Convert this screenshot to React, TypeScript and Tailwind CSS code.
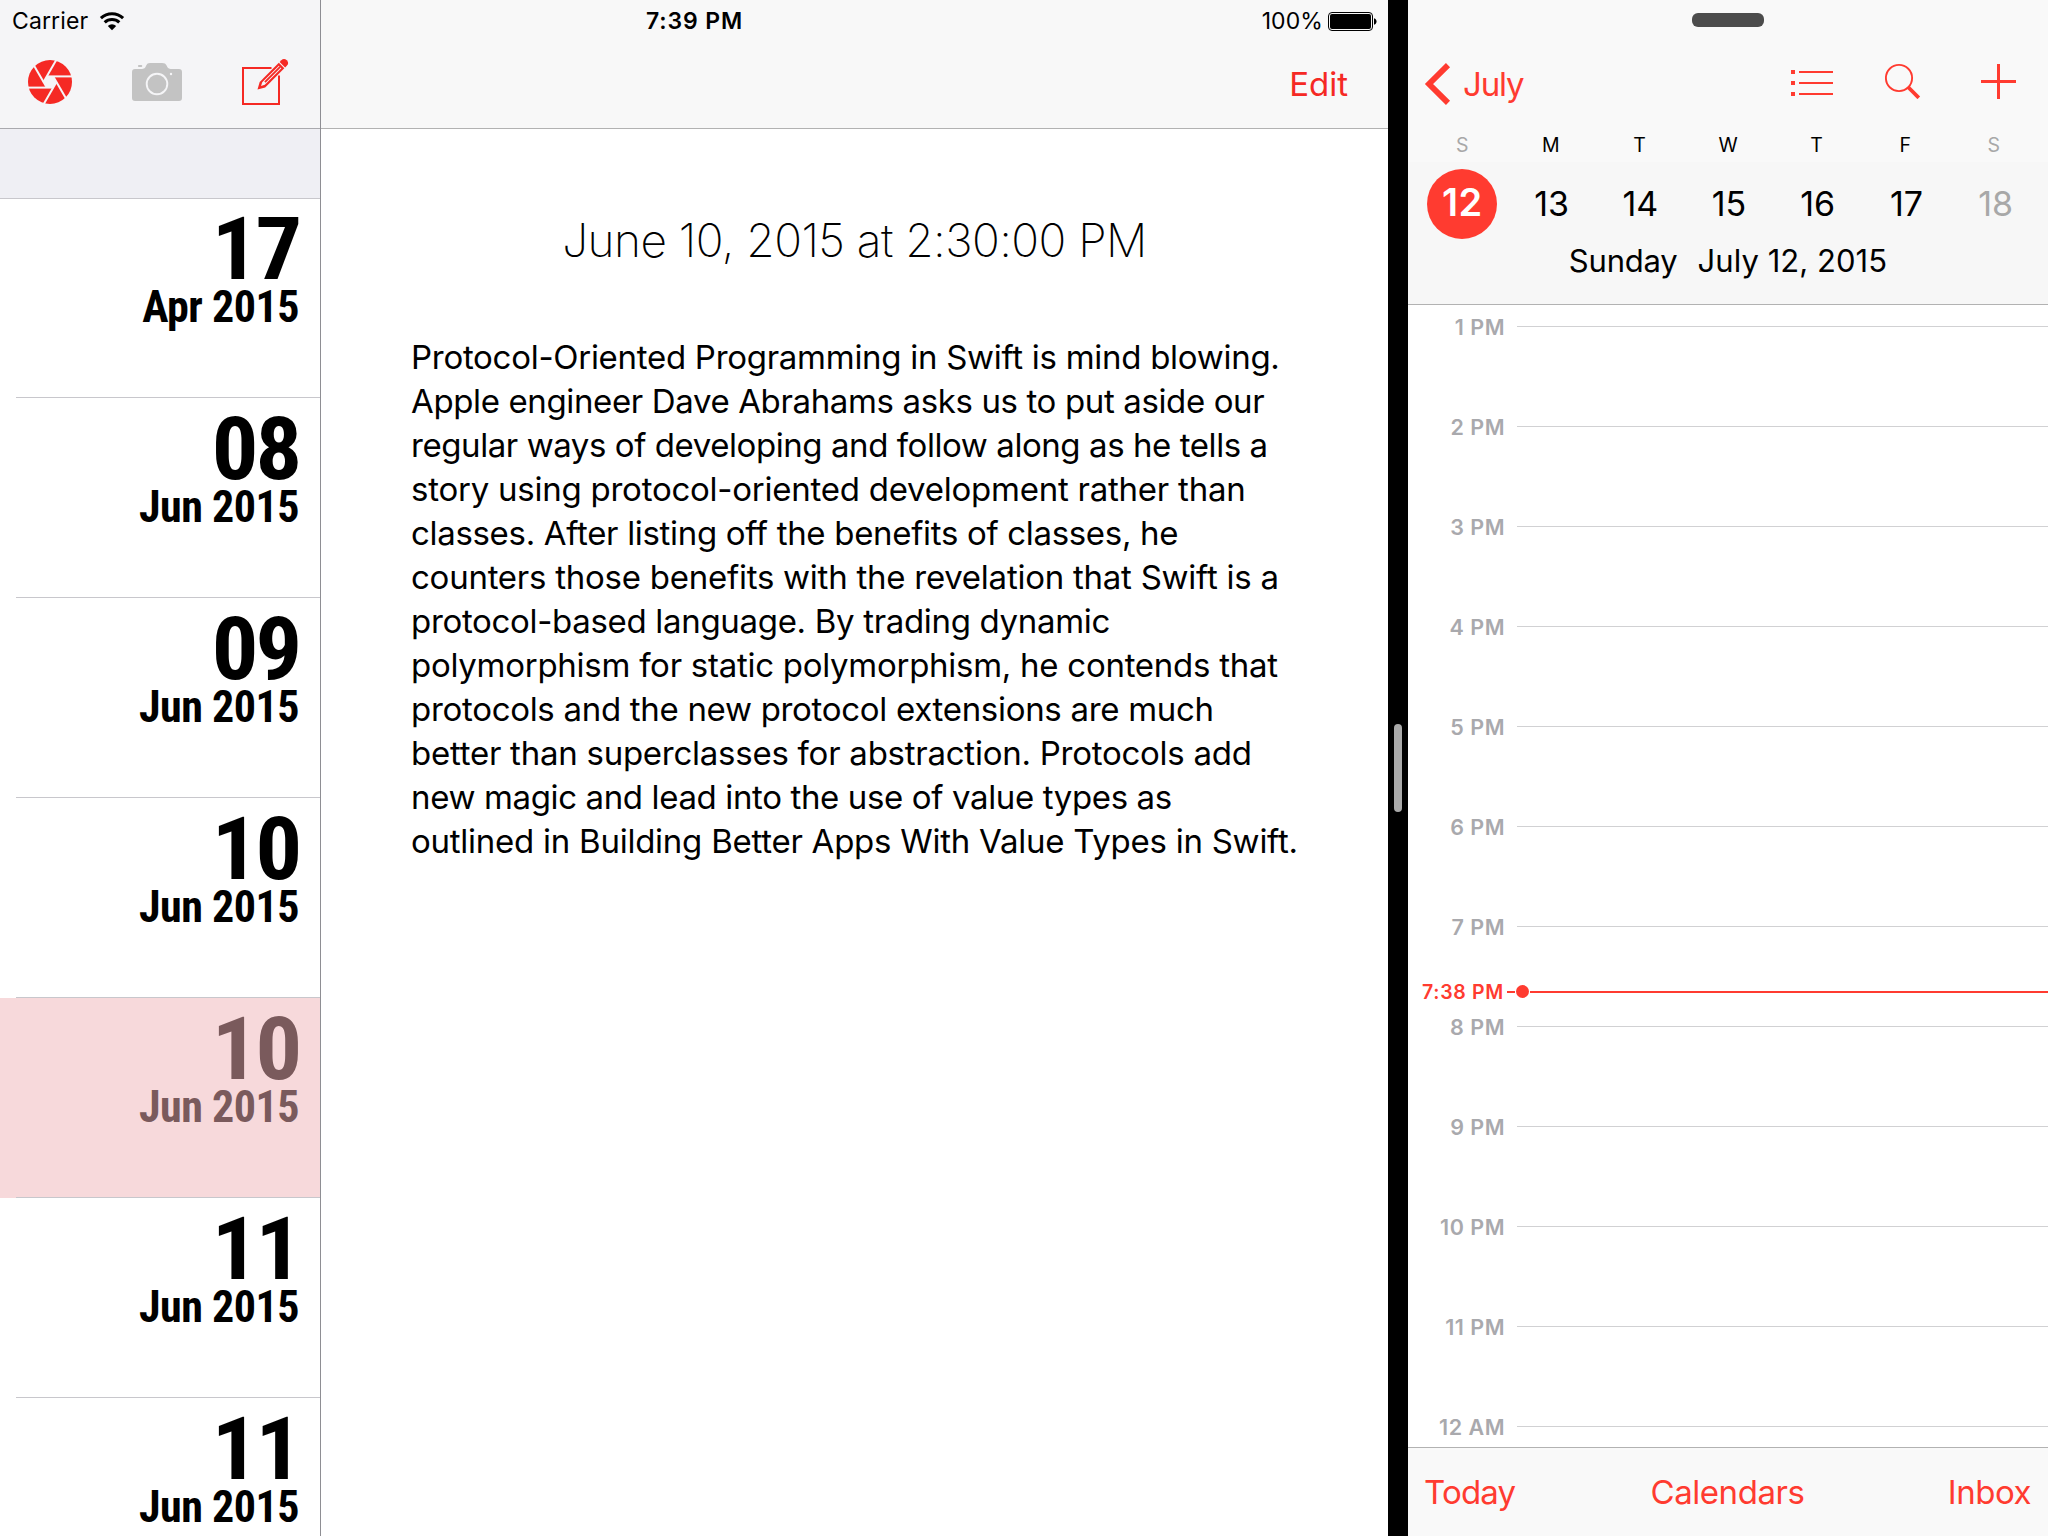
import React from "react";

type Entry = { day: string; month: string; selected?: boolean };

const entries: Entry[] = [
  { day: "17", month: "Apr 2015" },
  { day: "08", month: "Jun 2015" },
  { day: "09", month: "Jun 2015" },
  { day: "10", month: "Jun 2015" },
  { day: "10", month: "Jun 2015", selected: true },
  { day: "11", month: "Jun 2015" },
  { day: "11", month: "Jun 2015" },
];

const lines = [
  { text: "Protocol-Oriented Programming in Swift is mind blowing.", track: "tracking-[-0.28px]" },
  { text: "Apple engineer Dave Abrahams asks us to put aside our", track: "tracking-[-0.37px]" },
  { text: "regular ways of developing and follow along as he tells a", track: "tracking-[-0.43px]" },
  { text: "story using protocol-oriented development rather than", track: "tracking-[-0.24px]" },
  { text: "classes. After listing off the benefits of classes, he", track: "tracking-[-0.32px]" },
  { text: "counters those benefits with the revelation that Swift is a", track: "tracking-[-0.25px]" },
  { text: "protocol-based language. By trading dynamic", track: "tracking-[-0.32px]" },
  { text: "polymorphism for static polymorphism, he contends that", track: "tracking-[-0.27px]" },
  { text: "protocols and the new protocol extensions are much", track: "tracking-[-0.3px]" },
  { text: "better than superclasses for abstraction. Protocols add", track: "tracking-[-0.25px]" },
  { text: "new magic and lead into the use of value types as", track: "tracking-[-0.37px]" },
  { text: "outlined in Building Better Apps With Value Types in Swift.", track: "tracking-[-0.25px]" },
];

const week = [
  { letter: "S", date: "12", today: true, weekend: true },
  { letter: "M", date: "13" },
  { letter: "T", date: "14" },
  { letter: "W", date: "15" },
  { letter: "T", date: "16" },
  { letter: "F", date: "17" },
  { letter: "S", date: "18", weekend: true },
];

const hours = ["1 PM", "2 PM", "3 PM", "4 PM", "5 PM", "6 PM", "7 PM", "8 PM", "9 PM", "10 PM", "11 PM", "12 AM"];

function WifiIcon() {
  return (
    <svg className="h-[19px] w-[26px]" viewBox="0 0 26 19" fill="none" stroke="#000" strokeWidth="3.1">
      <path d="M1.9 6.1A16.5 16.5 0 0 1 24.1 6.1" />
      <path d="M5.7 10.4A10.7 10.7 0 0 1 20.3 10.4" />
      <path d="M13 18.3L8.8 13.9A6.1 6.1 0 0 1 17.2 13.9Z" fill="#000" stroke="none" />
    </svg>
  );
}

function BatteryIcon() {
  return (
    <svg className="h-[19px] w-[49px]" viewBox="0 0 49 19">
      <rect x="0.5" y="0.5" width="44" height="18" rx="3.5" fill="none" stroke="#000" />
      <rect x="2" y="2" width="41" height="15" rx="2" />
      <path d="M46 6.2C49.4 6.8 49.4 12.2 46 12.8Z" />
    </svg>
  );
}

function ApertureIcon() {
  return (
    <svg className="h-[44px] w-[44px]" viewBox="-22 -22 44 44">
      <circle r="22" fill="#f52924" />
      <path d="M-3.2 -5.6H3.2L6.4 0L3.2 5.6H-3.2L-6.4 0Z" fill="#f5f5f7" />
      <g stroke="#f5f5f7" strokeWidth="2">
        {[0, 60, 120, 180, 240, 300].map((a) => (
          <path key={a} d="M-3.2 -5.6H23" transform={`rotate(${a})`} />
        ))}
      </g>
    </svg>
  );
}

function CameraIcon() {
  return (
    <svg className="h-[38px] w-[50px]" viewBox="0 0 50 38">
      <path
        fill="#c3c3c3"
        d="M3 6H10C13 6 13.6 4 14.2 2.6C15 .7 16 0 18 0H30C32.6 0 33.8 .8 34.6 2.6C35.3 4.2 36 6 38.5 6H47Q50 6 50 9V35Q50 38 47 38H3Q0 38 0 35V9Q0 6 3 6Z"
      />
      <rect x="6" y="2" width="4.2" height="2" rx="0.8" fill="#c3c3c3" />
      <circle cx="25" cy="21" r="10.3" fill="none" stroke="#f5f5f7" strokeWidth="1.9" />
      <circle cx="39" cy="11" r="1.2" fill="#f5f5f7" />
    </svg>
  );
}

function ComposeIcon() {
  return (
    <svg className="h-[48px] w-[48px]" viewBox="0 0 48 48">
      <path d="M30.5 10H2V46H38V17.5" fill="none" stroke="#f52924" strokeWidth="2" />
      <g transform="translate(16.5 31.6) rotate(-45)">
        <path d="M0 0L7 -3.9H34V3.9H7Z" fill="#f52924" />
        <path d="M5 0L8.5 -1.8H32V-0.9H10.5V0.9H32V1.8H8.5Z" fill="#f5f5f7" />
        <path d="M35.2 -3.9H37.5A3.9 3.9 0 0 1 37.5 3.9H35.2Z" fill="#f52924" />
      </g>
    </svg>
  );
}

function Sidebar() {
  return (
    <aside className="flex w-[321px] shrink-0 flex-col overflow-hidden border-r border-[#8e8e93]">
      <header className="h-[129px] shrink-0 border-b border-[#a9a9ae] bg-[#f5f5f7]">
        <div className="flex h-[42px] items-center gap-[11px] pl-3">
          <span className="text-[23px] leading-[42px] tracking-[0.13px]">Carrier</span>
          <WifiIcon />
        </div>
        <div className="flex items-start pl-7">
          <div className="mt-[18px]"><ApertureIcon /></div>
          <div className="mt-[21px] ml-[60px]"><CameraIcon /></div>
          <div className="mt-4 ml-[59px]"><ComposeIcon /></div>
        </div>
      </header>
      <div className="h-[70px] shrink-0 border-b border-[#c8c7cc] bg-[#efeff4]" />
      <ul className="-mt-px">
        {entries.map((e, i) => (
          <li
            key={i}
            className={
              e.selected
                ? "flex h-[200px] flex-col bg-[#f7d9db] text-[#7a5a5c]"
                : "flex h-[200px] flex-col text-black"
            }
          >
            <div className="flex flex-1 flex-col items-end pt-[15px] pr-[21px] font-['Roboto'] font-bold [font-stretch:75%]">
              <span className="origin-right scale-x-[1.05] text-[88px] leading-[72px] tracking-[-2.8px]">{e.day}</span>
              <span className="text-[44px] leading-[44px] tracking-[-0.5px]">{e.month}</span>
            </div>
            <div className="ml-4 h-px bg-[#c8c7cc]" />
          </li>
        ))}
      </ul>
    </aside>
  );
}

function Detail() {
  return (
    <main className="flex w-[1067px] shrink-0 flex-col bg-white">
      <header className="h-[129px] shrink-0 border-b border-[#b2b2b2] bg-[#f8f8f8]">
        <div className="flex h-[42px] items-center justify-between pr-[11px] pl-[325px] text-[23px] leading-[42px]">
          <span className="font-semibold tracking-[0.87px]">7:39 PM</span>
          <div className="flex items-center gap-[5px]">
            <span className="tracking-[0.1px]">100%</span>
            <BatteryIcon />
          </div>
        </div>
        <div className="-mt-[2px] flex h-[88px] items-center justify-end pr-10 text-[33px] leading-[44px] text-[#f52924]">
          Edit
        </div>
      </header>
      <h1 className="mt-[81px] text-center text-[46px] leading-[60px] font-extralight tracking-[-0.55px]">
        June 10, 2015 at 2:30:00 PM
      </h1>
      <div className="mt-[65px] pl-[90px] text-[33px] leading-[44px] whitespace-nowrap">
        {lines.map((l) => (
          <p key={l.text} className={l.track}>{l.text}</p>
        ))}
      </div>
    </main>
  );
}

function Calendar() {
  return (
    <section className="flex w-[640px] flex-col bg-white">
      <header className="flex h-[162px] shrink-0 flex-col bg-[#f9f9f9]">
        <div className="flex h-10 justify-center pt-[13px]">
          <div className="h-[14px] w-[72px] rounded-md bg-[#4c4c4c]" />
        </div>
        <div className="flex h-[88px] items-center pl-4 text-[#ff3b30]">
          <svg className="h-[42px] w-[27px]" viewBox="0 0 27 42" fill="none" stroke="#ff3b30" strokeWidth="5.8">
            <path d="M24 2.1L5 21L24 39.9" />
          </svg>
          <span className="ml-3 text-[33px] leading-[44px] tracking-[-1.2px]">July</span>
          <svg className="mt-[-2px] ml-auto h-[26px] w-[42px]" viewBox="0 0 42 26" fill="#ff3b30">
            <path d="M0 0H4V4H0ZM0 11H4V15H0ZM0 22H4V26H0ZM8 1H42V3H8ZM8 12H42V14H8ZM8 23H42V25H8Z" />
          </svg>
          <svg className="mt-[-6px] ml-[52px] h-[36px] w-[36px]" viewBox="0 0 36 36" fill="none" stroke="#ff3b30">
            <circle cx="14" cy="15" r="13.1" strokeWidth="1.9" />
            <path d="M23 24L33.8 34.8" strokeWidth="3.8" />
          </svg>
          <svg className="mt-[-5px] mr-8 ml-[60px] h-[35px] w-[35px]" viewBox="0 0 35 35" fill="#ff3b30">
            <path d="M16 0H19V16H35V19H19V35H16V19H0V16H16Z" />
          </svg>
        </div>
        <div className="grid h-[34px] grid-cols-7 items-center px-[10px] pt-[2px] text-center text-[19.5px]">
          {week.map((d) => (
            <span key={d.date} className={d.weekend ? "text-[#a8a8a8]" : "text-black"}>{d.letter}</span>
          ))}
        </div>
      </header>
      <div className="h-[143px] shrink-0 border-b border-[#b2b2b2] bg-[#f7f7f7] pt-[7px]">
        <div className="grid grid-cols-7 pr-[9px] pl-[10px] text-[34px]">
          {week.map((d) =>
            d.today ? (
              <div
                key={d.date}
                className="mx-auto flex h-[70px] w-[70px] items-center justify-center rounded-full bg-[#ff3b30] pb-[3px] text-[38px] font-semibold tracking-[0.5px] text-white"
              >
                {d.date}
              </div>
            ) : (
              <div
                key={d.date}
                className={
                  d.weekend
                    ? "flex h-[70px] items-center justify-center pb-[2px] pl-[2px] text-[#a8a8a8]"
                    : "flex h-[70px] items-center justify-center pb-[2px] pl-[1px] text-black"
                }
              >
                {d.date}
              </div>
            ),
          )}
        </div>
        <div className="flex justify-center gap-[20px] text-[31px] leading-[44px]">
          <span className="tracking-[-0.2px]">Sunday</span>
          <span className="tracking-[0.05px]">July 12, 2015</span>
        </div>
      </div>
      <div className="relative flex-1 overflow-hidden">
        {hours.map((h) => (
          <div key={h} className="flex h-[100px] items-start">
            <span className="w-[97px] text-right text-[21.5px] leading-[44px] font-semibold tracking-[0.5px] text-[#a9a9ad]">
              {h}
            </span>
            <div className="mt-[21px] ml-[12px] h-px flex-1 bg-[#d1d1d3]" />
          </div>
        ))}
        <div className="absolute inset-x-0 top-[672px] flex h-[30px] items-center">
          <span className="w-[96px] text-right text-[19.5px] leading-[30px] font-semibold tracking-[0.7px] text-[#ff3b30]">
            7:38 PM
          </span>
          <div className="ml-[3px] h-[2px] w-2 bg-[#ff3b30]" />
          <div className="-mt-px ml-px h-[13px] w-[13px] rounded-full bg-[#ff3b30]" />
          <div className="ml-px h-[2px] flex-1 bg-[#ff3b30]" />
        </div>
      </div>
      <footer className="grid h-[89px] shrink-0 grid-cols-3 items-center border-t border-[#b2b2b2] bg-[#f9f9f9] pr-[17px] pl-4 text-[33px] leading-[44px] text-[#ff3b30]">
        <span className="tracking-[-0.8px]">Today</span>
        <span className="text-center tracking-[-0.45px]">Calendars</span>
        <span className="text-right tracking-[-0.5px]">Inbox</span>
      </footer>
    </section>
  );
}

export default function App() {
  return (
    <div className="flex h-[1536px] w-[2048px] overflow-hidden bg-white font-['Inter',sans-serif] text-black">
      <Sidebar />
      <Detail />
      <div className="flex w-5 shrink-0 items-center justify-center bg-black">
        <div className="h-[88px] w-2 rounded-full bg-[#a9a9a9]" />
      </div>
      <Calendar />
    </div>
  );
}
